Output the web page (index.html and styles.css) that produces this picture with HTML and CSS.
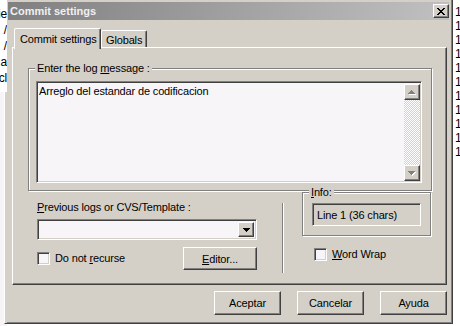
FILE: index.html
```html
<!DOCTYPE html>
<html lang="en">
<head>
    <meta charset="UTF-8">
    <title>Commit settings</title>
    <link rel="stylesheet" href="styles.css">
</head>
<body>
    <div class="backdrop-left">
        <div class="backdrop-text">
            <span>ie</span><span>/</span><span>/</span><span>a</span><span>cl</span>
        </div>
        <div class="backdrop-rest"></div>
    </div>

    <div class="dialog">
        <div class="titlebar">
            <span class="title">Commit settings</span>
            <button class="close-btn raised">
                <svg width="8" height="7" viewBox="0 0 8 7" shape-rendering="crispEdges"><path d="M0 0h2v1h1v1h2V1h1V0h2v1H7v1H6v1H5v1h1v1h1v1h1v1H6V6H5V5H3v1H2v1H0V6h1V5h1V4h1V3H2V2H1V1H0z" fill="#000"/></svg>
            </button>
        </div>

        <div class="tabs">
            <div class="tab tab-active">Commit settings</div>
            <div class="tab">Globals</div>
        </div>

        <div class="tab-panel">
            <div class="group group-log">
                <span class="group-title">Enter the log <u>m</u>essage :</span>
                <div class="log-box sunken">
                    <div class="log-text">Arreglo del estandar de codificacion</div>
                    <div class="scrollbar">
                        <div class="sb-btn raised">
                            <svg width="8" height="5" viewBox="0 0 8 5" shape-rendering="crispEdges"><path d="M4 1h1v1h1v1h1v1h1v1H1V4h1V3h1V2h1z" fill="#fff"/><path d="M3 0h1v1h1v1h1v1h1v1H0V3h1V2h1V1h1z" fill="#808080"/></svg>
                        </div>
                        <div class="sb-track"></div>
                        <div class="sb-btn raised">
                            <svg width="8" height="5" viewBox="0 0 8 5" shape-rendering="crispEdges"><path d="M1 1h7v1H7v1H6v1H5v1H4V4H3V3H2V2H1z" fill="#fff"/><path d="M0 0h7v1H6v1H5v1H4v1H3V3H2V2H1V1H0z" fill="#808080"/></svg>
                        </div>
                    </div>
                </div>
            </div>

            <div class="lower">
                <div class="prev-col">
                    <div class="field-label"><u>P</u>revious logs or CVS/Template :</div>
                    <div class="combo sunken">
                        <div class="combo-btn raised">
                            <svg width="7" height="4" viewBox="0 0 7 4" shape-rendering="crispEdges"><path d="M0 0h7v1H6v1H5v1H4v1H3V3H2V2H1V1H0z" fill="#000"/></svg>
                        </div>
                    </div>
                    <div class="check-row">
                        <label class="check"><span class="check-box sunken"></span><span>Do not <u>r</u>ecurse</span></label>
                        <button class="btn btn-editor raised"><u>E</u>ditor...</button>
                    </div>
                </div>

                <div class="vsep"></div>

                <div class="info-col">
                    <div class="group group-info">
                        <span class="group-title"><u>I</u>nfo:</span>
                        <div class="info-field sunken">Line 1 (36 chars)</div>
                    </div>
                    <label class="check check-wrap"><span class="check-box sunken"></span><span><u>W</u>ord Wrap</span></label>
                </div>
            </div>
        </div>

        <div class="actions">
            <button class="btn btn-action raised">Aceptar</button>
            <button class="btn btn-action raised">Cancelar</button>
            <button class="btn btn-action raised">Ayuda</button>
        </div>
    </div>

    <div class="backdrop-right">
        <span>1</span><span>1</span><span>1</span><span>1</span><span>1</span><span>1</span>
        <span>1</span><span>1</span><span>1</span><span>1</span><span>1</span>
    </div>
</body>
</html>
```

FILE: styles.css
```css
* {
    box-sizing: border-box;
}

body {
    margin: 0;
    width: 460px;
    height: 326px;
    overflow: hidden;
    display: flex;
    background: #fff;
    font-family: "Liberation Sans", Arial, sans-serif;
    font-size: 11px;
    letter-spacing: -0.15px;
    color: #000;
}

/* bits of the windows behind the dialog */
.backdrop-left {
    width: 7px;
    flex: none;
    display: flex;
    flex-direction: column;
    background: #f7f4f7;
}

.backdrop-text {
    width: 20px;
    height: 92px;
    margin-left: -13px;
    padding-top: 6px;
    text-align: right;
    font-size: 12px;
    line-height: 16px;
    background: #fff;
}

.backdrop-text span {
    display: block;
}

.backdrop-rest {
    flex: 1;
    margin: 0 0 2px 4px;
    border-left: 1px solid #fff;
    border-bottom: 1px solid #404040;
    background: #d4d0c8;
}

.backdrop-right {
    width: 7px;
    flex: none;
    padding: 5px 0 0 2px;
    font-size: 12px;
    line-height: 14px;
    overflow: hidden;
}

.backdrop-right span {
    display: block;
}

/* win2000 bevels */
.raised {
    background: #d4d0c8;
    border: 1px solid;
    border-color: #fff #404040 #404040 #fff;
    box-shadow: inset -1px -1px 0 #808080;
}

.sunken {
    border: 1px solid;
    border-color: #808080 #fff #fff #808080;
    box-shadow: inset 1px 1px 0 #404040, inset -1px -1px 0 #d4d0c8;
}

.dialog {
    width: 446px;
    height: 324px;
    flex: none;
    display: flex;
    flex-direction: column;
    padding: 2px 3px 0 1px;
    background: #d4d0c8;
    border-right: 1px solid #404040;
    border-bottom: 1px solid #404040;
    box-shadow: inset -1px -1px 0 #808080;
}

.titlebar {
    height: 18px;
    display: flex;
    align-items: center;
    justify-content: space-between;
    padding-left: 2px;
    background: linear-gradient(to right, #808080, #c0c0c0);
}

.title {
    color: #f0f0f0;
    font-weight: bold;
    letter-spacing: 0;
}

.close-btn {
    width: 16px;
    height: 14px;
    padding: 0;
    display: flex;
    align-items: center;
    justify-content: center;
}

.tabs {
    display: flex;
    align-items: flex-end;
    margin: 8px 0 0 6px;
}

.tab {
    height: 17px;
    padding: 2px 4px 0 4px;
    display: flex;
    align-items: center;
    white-space: nowrap;
    border: 1px solid;
    border-color: #fff #404040 transparent #fff;
    border-bottom: none;
    border-radius: 2px 2px 0 0;
    box-shadow: inset -1px 0 0 #808080;
}

.tab-active {
    width: 87px;
    height: 21px;
    margin-bottom: -2px;
    padding: 0 5px;
    position: relative;
    z-index: 1;
    background: #d4d0c8;
}

.tab-panel {
    width: 435px;
    height: 238px;
    margin-left: 4px;
    padding: 20px 0 0 15px;
    border: 1px solid;
    border-color: #fff #404040 #404040 #fff;
    box-shadow: inset -1px -1px 0 #808080;
}

.group {
    position: relative;
    border: 1px solid #808080;
    box-shadow: 1px 1px 0 #fff, inset 1px 1px 0 #fff;
}

.group-title {
    position: absolute;
    top: -7px;
    left: 6px;
    padding: 0 2px;
    line-height: 13px;
    white-space: nowrap;
    background: #d4d0c8;
}

.group-log {
    width: 404px;
    height: 123px;
    padding: 12px 0 0 7px;
}

.log-box {
    width: 386px;
    height: 102px;
    display: flex;
    background: #f8f5f8;
}

.log-text {
    flex: 1;
    padding: 3px 2px;
    line-height: 13px;
}

.scrollbar {
    width: 16px;
    margin: 2px 1px 1px 0;
    display: flex;
    flex-direction: column;
}

.sb-btn {
    height: 16px;
    display: flex;
    align-items: center;
    justify-content: center;
}

.sb-track {
    flex: 1;
    background: repeating-conic-gradient(#d4d0c8 0 25%, #fff 0 50%) 0 0 / 2px 2px;
}

.lower {
    display: flex;
}

.prev-col {
    width: 220px;
    margin: 10px 0 0 9px;
    display: flex;
    flex-direction: column;
}

.field-label {
    line-height: 13px;
}

.combo {
    height: 21px;
    margin-top: 5px;
    display: flex;
    justify-content: flex-end;
    padding: 2px 2px 2px 0;
    background: #f8f5f8;
}

.combo-btn {
    width: 16px;
    display: flex;
    align-items: center;
    justify-content: center;
}

.check-row {
    height: 23px;
    margin-top: 7px;
    display: flex;
    align-items: center;
    justify-content: space-between;
}

.check {
    display: flex;
    align-items: center;
    gap: 5px;
    line-height: 13px;
    white-space: nowrap;
}

.check-box {
    width: 13px;
    height: 13px;
    background: #f8f5f8;
}

.btn {
    font: inherit;
    letter-spacing: inherit;
    color: #000;
    padding: 0;
}

.btn-editor {
    width: 74px;
    height: 23px;
}

.vsep {
    width: 2px;
    height: 70px;
    margin: 12px 0 0 25px;
    border-left: 1px solid #808080;
    border-right: 1px solid #fff;
}

.info-col {
    margin: 1px 0 0 18px;
}

.group-info {
    width: 129px;
    height: 44px;
    padding: 10px 0 0 9px;
}

.info-field {
    width: 109px;
    height: 23px;
    padding-left: 4px;
    display: flex;
    align-items: center;
}

.check-wrap {
    margin: 12px 0 0 12px;
}

.actions {
    width: 435px;
    margin: 6px 0 0 4px;
    display: flex;
    justify-content: flex-end;
    gap: 16px;
}

.btn-action {
    width: 67px;
    height: 24px;
}
```
